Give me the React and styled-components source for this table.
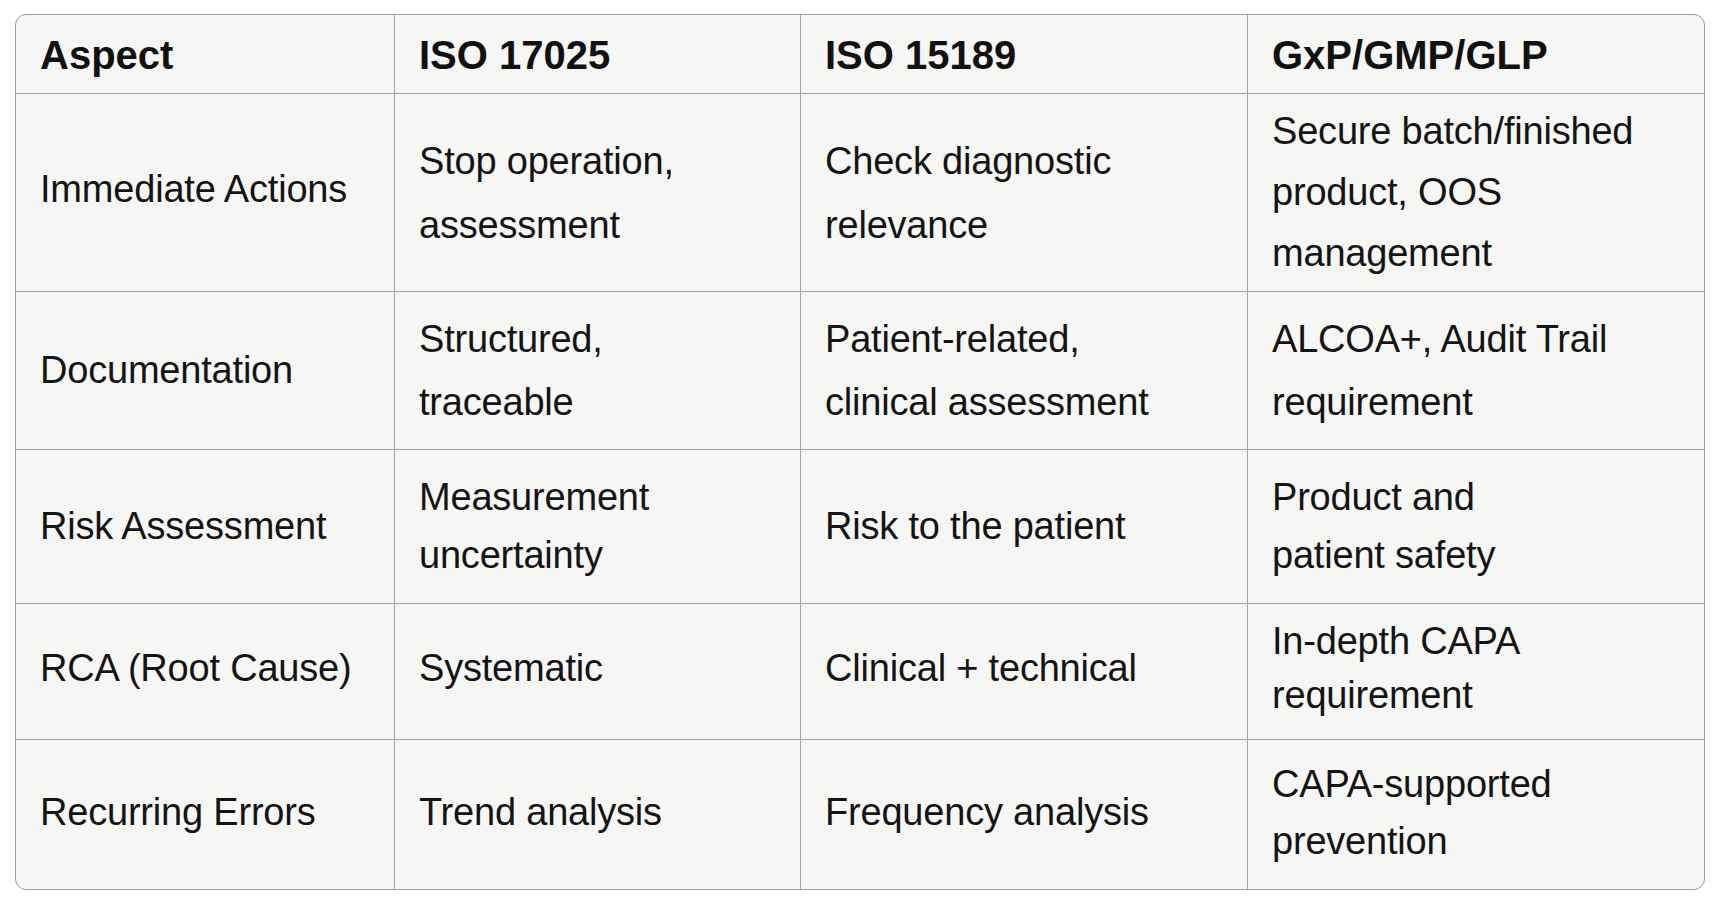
import React from "react";
import styled, { createGlobalStyle } from "styled-components";

const Global = createGlobalStyle`
  html, body { margin: 0; padding: 0; background: #ffffff; }
  body { font-family: "Liberation Sans", Arial, sans-serif; color: #111111; }
`;

const Page = styled.div`
  padding: 14px 0 0 15px;
`;

const Table = styled.div`
  box-sizing: border-box;
  width: 1690px;
  display: grid;
  grid-template-columns: 379px 406px 447px 456px;
  grid-template-rows: 79px 198px 158px 154px 136px 149px;
  border: 1px solid #9e9e9e;
  border-radius: 11px;
  overflow: hidden;
  background: #f6f6f5;
`;

const Cell = styled.div`
  box-sizing: border-box;
  display: flex;
  flex-direction: column;
  justify-content: center;
  padding: 0 10px ${(p) => p.$lift || 0}px 24px;
  border-right: ${(p) => (p.$lastCol ? "none" : "1px solid #a3a3a3")};
  border-bottom: ${(p) => (p.$lastRow ? "none" : "1px solid #a3a3a3")};
  font-size: 38px;
  letter-spacing: -0.2px;
  line-height: ${(p) => p.$lh}px;
  color: #141414;
  white-space: nowrap;
`;

const HeadCell = styled(Cell)`
  font-weight: 700;
  font-size: 40px;
  letter-spacing: 0;
  color: #111111;
  padding-top: 1px;
`;

const header = ["Aspect", "ISO 17025", "ISO 15189", "GxP/GMP/GLP"];

const rows = [
  {
    lh: 64,
    lift: 0,
    cells: [
      { lines: ["Immediate Actions"], lift: 8 },
      { lines: ["Stop operation,", "assessment"] },
      { lines: ["Check diagnostic", "relevance"] },
      { lines: ["Secure batch/finished", "product, OOS", "management"], lh: 61 },
    ],
  },
  {
    lh: 63,
    lift: 0,
    cells: [
      { lines: ["Documentation"] },
      { lines: ["Structured,", "traceable"] },
      { lines: ["Patient-related,", "clinical assessment"] },
      { lines: ["ALCOA+, Audit Trail", "requirement"] },
    ],
  },
  {
    lh: 58,
    lift: 2,
    cells: [
      { lines: ["Risk Assessment"] },
      { lines: ["Measurement", "uncertainty"] },
      { lines: ["Risk to the patient"] },
      { lines: ["Product and", "patient safety"] },
    ],
  },
  {
    lh: 54,
    lift: 8,
    cells: [
      { lines: ["RCA (Root Cause)"] },
      { lines: ["Systematic"] },
      { lines: ["Clinical + technical"] },
      { lines: ["In-depth CAPA", "requirement"] },
    ],
  },
  {
    lh: 57,
    lift: 4,
    cells: [
      { lines: ["Recurring Errors"] },
      { lines: ["Trend analysis"] },
      { lines: ["Frequency analysis"] },
      { lines: ["CAPA-supported", "prevention"] },
    ],
  },
];

export default function App() {
  return (
    <>
      <Global />
      <Page>
        <Table>
          {header.map((h, i) => (
            <HeadCell key={h} $lh={48} $lastCol={i === 3}>
              {h}
            </HeadCell>
          ))}
          {rows.map((r, ri) =>
            r.cells.map((c, ci) => (
              <Cell
                key={`${ri}-${ci}`}
                $lh={c.lh || r.lh}
                $lift={c.lift !== undefined ? c.lift : r.lift}
                $lastCol={ci === 3}
                $lastRow={ri === rows.length - 1}
              >
                {c.lines.map((l, li) => (
                  <span key={li}>{l}</span>
                ))}
              </Cell>
            ))
          )}
        </Table>
      </Page>
    </>
  );
}
